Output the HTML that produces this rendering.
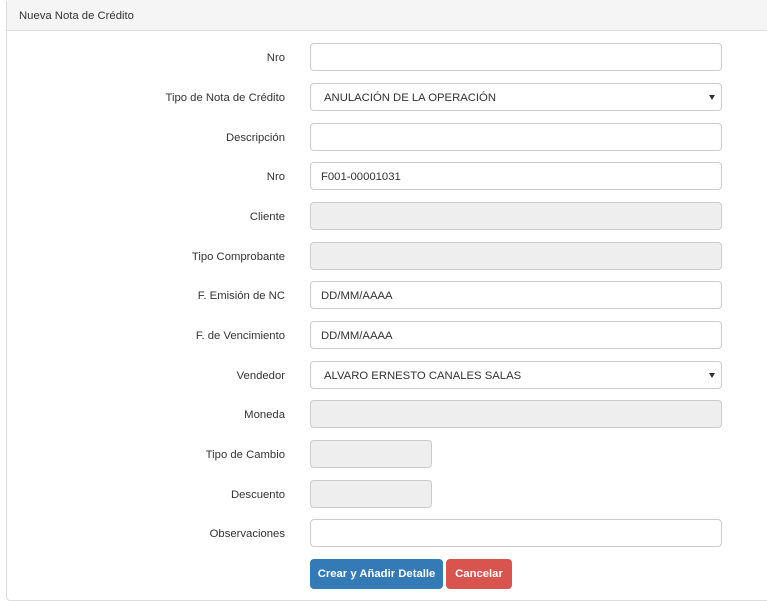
<!DOCTYPE html>
<html><head><meta charset="utf-8"><style>
html,body{margin:0;width:767px;height:581px;overflow:hidden}
body{background:#fff;font-family:"Liberation Sans",Arial,sans-serif;font-size:11.3px;color:#333}
.panel{position:absolute;left:6px;top:-1px;width:780px;height:600px;border:1px solid #ddd;border-radius:4px}
.hd{height:30px;background:#f5f5f5;border-bottom:1px solid #ddd;line-height:32px;padding-left:12px;color:#333}
.row{position:absolute;left:0;height:28px}
.lbl{position:absolute;left:0;width:285px;text-align:right;line-height:30px}
.in{position:absolute;left:310px;height:26px;border:1px solid #ccc;border-radius:4px;background:#fff;line-height:28px;padding-left:10px;width:400px}
.dis{background:#eee}
.sm{width:110px}
.sel{padding-left:13px;width:397px}
.sel:after{content:"";position:absolute;right:6px;top:11px;border-left:3px solid transparent;border-right:3px solid transparent;border-top:5px solid #333}
.btn{position:absolute;top:559px;height:30px;color:#fff;border-radius:4px;line-height:30px;text-align:center;font-size:11.3px;font-weight:bold}
</style></head><body>
<div class="panel"><div class="hd">Nueva Nota de Crédito</div></div>
<div class="row" style="top:43px"><div class="lbl">Nro</div><div class="in"></div></div>
<div class="row" style="top:83px"><div class="lbl">Tipo de Nota de Crédito</div><div class="in sel">ANULACIÓN DE LA OPERACIÓN</div></div>
<div class="row" style="top:123px"><div class="lbl">Descripción</div><div class="in"></div></div>
<div class="row" style="top:162px"><div class="lbl">Nro</div><div class="in">F001-00001031</div></div>
<div class="row" style="top:202px"><div class="lbl">Cliente</div><div class="in dis"></div></div>
<div class="row" style="top:242px"><div class="lbl">Tipo Comprobante</div><div class="in dis"></div></div>
<div class="row" style="top:281px"><div class="lbl">F. Emisión de NC</div><div class="in">DD/MM/AAAA</div></div>
<div class="row" style="top:321px"><div class="lbl">F. de Vencimiento</div><div class="in">DD/MM/AAAA</div></div>
<div class="row" style="top:361px"><div class="lbl">Vendedor</div><div class="in sel">ALVARO ERNESTO CANALES SALAS</div></div>
<div class="row" style="top:400px"><div class="lbl">Moneda</div><div class="in dis"></div></div>
<div class="row" style="top:440px"><div class="lbl">Tipo de Cambio</div><div class="in dis sm"></div></div>
<div class="row" style="top:480px"><div class="lbl">Descuento</div><div class="in dis sm"></div></div>
<div class="row" style="top:519px"><div class="lbl">Observaciones</div><div class="in"></div></div>
<div class="btn" style="left:310px;width:133px;background:#337ab7">Crear y Añadir Detalle</div>
<div class="btn" style="left:446px;width:66px;background:#d9534f">Cancelar</div>
</body></html>
